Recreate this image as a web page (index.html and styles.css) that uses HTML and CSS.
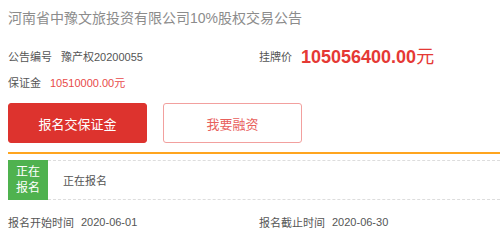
FILE: index.html
```html
<!DOCTYPE html>
<html lang="zh-CN">
<head>
<meta charset="utf-8">
<link rel="stylesheet" href="styles.css">
</head>
<body>
<div class="page">
  <h1 class="title">河南省中豫文旅投资有限公司10%股权交易公告</h1>
  <div class="info-grid">
    <div class="info-item row1">
      <span class="label">公告编号</span>
      <span class="value">豫产权20200055</span>
    </div>
    <div class="info-item row1">
      <span class="label">挂牌价</span>
      <span class="price">105056400.00<span class="unit">元</span></span>
    </div>
    <div class="info-item row2">
      <span class="label">保证金</span>
      <span class="deposit">10510000.00元</span>
    </div>
  </div>
  <div class="actions">
    <button class="btn btn-primary">报名交保证金</button>
    <button class="btn btn-outline">我要融资</button>
  </div>
  <div class="divider"></div>
  <div class="status">
    <div class="badge">正在<br>报名</div>
    <div class="status-text">正在报名</div>
  </div>
  <div class="dates">
    <div class="info-item"><span class="label">报名开始时间</span><span class="value">2020-06-01</span></div>
    <div class="info-item"><span class="label">报名截止时间</span><span class="value">2020-06-30</span></div>
  </div>
</div>
</body>
</html>
```
FILE: styles.css
```css
html, body {
  margin: 0;
  padding: 0;
  background: #fff;
  overflow: hidden;
}
body {
  font-family: "Liberation Sans", "Noto Sans CJK SC", sans-serif;
  color: #555;
}
.page {
  width: 502px;
  padding-left: 8px;
}
.title {
  margin: 0;
  padding-top: 8px;
  font-size: 14px;
  line-height: 20px;
  font-weight: normal;
  color: #8c8c8c;
}
.info-grid {
  display: grid;
  grid-template-columns: 251px 251px;
  margin-top: 16px;
  row-gap: 4px;
}
.info-item {
  display: flex;
  align-items: center;
  font-size: 11px;
}
.row1 { height: 24px; }
.row2 { height: 20px; }
.label {
  color: #555;
  margin-right: 9px;
}
.value {
  color: #555;
}
.price {
  color: #e53935;
  font-size: 18px;
  font-weight: bold;
  position: relative;
  top: -1px;
}
.price .unit {
  font-weight: normal;
}
.deposit {
  color: #e84a4a;
}
.actions {
  display: flex;
  gap: 16px;
  margin-top: 11px;
}
.btn {
  width: 139px;
  height: 40px;
  border-radius: 3px;
  font-family: "Liberation Sans", "Noto Sans CJK SC", sans-serif;
  font-size: 13px;
  cursor: pointer;
  padding: 0;
}
.btn-primary {
  background: #dd332e;
  border: 1px solid #dd332e;
  color: #fff;
}
.btn-outline {
  background: #fff;
  border: 1px solid #f2a09e;
  color: #e8605c;
}
.divider {
  margin-top: 9px;
  border-top: 2px solid #ffa51f;
}
.status {
  display: flex;
  margin-top: 6px;
}
.badge {
  width: 40px;
  height: 40px;
  background: #4fb24f;
  color: #fff;
  font-size: 12px;
  line-height: 16px;
  display: flex;
  align-items: center;
  justify-content: center;
  text-align: center;
}
.status-text {
  flex: 1;
  display: flex;
  align-items: center;
  padding-left: 15px;
  font-size: 11px;
  color: #555;
  border-top: 1px dashed #ddd;
  border-bottom: 1px dashed #ddd;
  box-sizing: border-box;
  height: 40px;
}
.dates {
  display: grid;
  grid-template-columns: 251px 251px;
  margin-top: 12px;
}
.dates .info-item {
  height: 20px;
}
.dates .label {
  margin-right: 7px;
}
```
